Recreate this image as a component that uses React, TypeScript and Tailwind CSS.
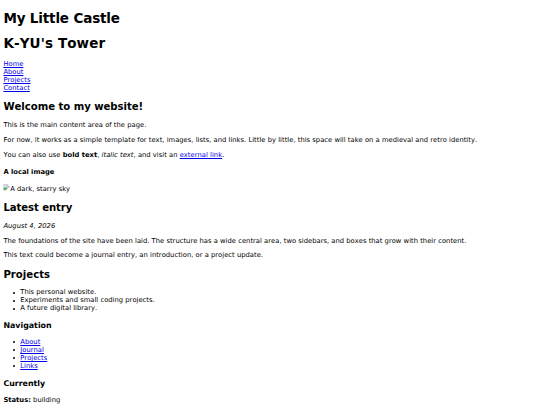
import type { ReactNode } from "react";

function Link({ children }: { children: ReactNode }) {
  return (
    <a href="#" className="text-[#0000ee] underline decoration-[0.5px]">
      {children}
    </a>
  );
}

function H2({ children, className = "" }: { children: ReactNode; className?: string }) {
  return <h2 className={`mt-[8.404px] mb-[7.404px] pt-[1px] text-[10.125px] leading-[12.234px] font-bold ${className}`}>{children}</h2>;
}

function H3({ children }: { children: ReactNode }) {
  return <h3 className="mt-[7.898px] mb-[6.898px] pt-[1px] text-[7.898px] leading-[9.703px] font-bold tracking-[0.01px]">{children}</h3>;
}

function P({ children }: { children: ReactNode }) {
  return <p className="my-[6.75px]">{children}</p>;
}

function Item({ children }: { children: ReactNode }) {
  return (
    <li className="flex items-center">
      <span className="mt-[0.5px] mr-[5px] h-[2px] w-[2px] shrink-0 rounded-full bg-black" />
      <span>{children}</span>
    </li>
  );
}

function BrokenImage({ alt }: { alt: string }) {
  return (
    <span className="inline-flex h-[8.4px] items-start">
      <svg viewBox="0 0 16 16" className="-mt-[0.5px] h-[6.75px] w-[6.75px] shrink-0" aria-hidden="true">
        <path d="M1.5 1.5h9l4 4v3l-3 1.5-3 3-2 1.5h-5z" fill="#c5d8f5" stroke="#9a9a9a" />
        <path d="M10.5 1.5v4h4" fill="#fff" stroke="#9a9a9a" />
        <path d="M2 14v-3l4-4 4 3-4 4z" fill="#4caf50" />
        <path d="M3.5 5.5a1.5 1.5 0 0 1 3-1 1.5 1.5 0 0 1 1 2h-4z" fill="#fff" />
      </svg>
      <span>{alt}</span>
    </span>
  );
}

export default function App() {
  return (
    <main className="flow-root h-[405px] overflow-hidden bg-white px-[3.375px] font-['DejaVu_Sans',Verdana,sans-serif] text-[6.75px] leading-[8.016px] tracking-[0.024px] text-black [font-kerning:none]">
      <h1 className="mt-[9.045px] pt-[0.5px] text-[13.5px] leading-[16.453px] font-bold tracking-[-0.15px]">
        My Little Castle
      </h1>
      <h1 className="mt-[8.545px] mb-[9.045px] text-[13.5px] leading-[16.453px] font-bold tracking-[0.12px]">
        K-YU's Tower
      </h1>
      <nav>
        <div><Link>Home</Link></div>
        <div><Link>About</Link></div>
        <div><Link>Projects</Link></div>
        <div><Link>Contact</Link></div>
      </nav>

      <H2 className="tracking-[-0.03px]">Welcome to my website!</H2>
      <P>This is the main content area of the page.</P>
      <P>
        For now, it works as a simple template for text, images, lists, and links. Little by little, this space will
        take on a medieval and retro identity.
      </P>
      <P>
        You can also use <strong className="font-bold">bold text</strong>, <em>italic text</em>, and visit an{" "}
        <Link>external link</Link>.
      </P>
      <h4 className="my-[8.978px] font-bold tracking-normal">A local image</h4>
      <div className="flex h-[8.3px]">
        <BrokenImage alt="A dark, starry sky" />
      </div>

      <H2 className="tracking-[-0.08px]">Latest entry</H2>
      <P><em>August 4, 2026</em></P>
      <P>
        The foundations of the site have been laid. The structure has a wide central area, two sidebars, and boxes that
        grow with their content.
      </P>
      <P>This text could become a journal entry, an introduction, or a project update.</P>

      <H2>Projects</H2>
      <ul className="my-[6.75px] pl-[9.875px]">
        <Item>This personal website.</Item>
        <Item>Experiments and small coding projects.</Item>
        <Item>A future digital library.</Item>
      </ul>

      <H3>Navigation</H3>
      <ul className="my-[6.75px] pl-[9.875px]">
        <Item><Link>About</Link></Item>
        <Item><Link>Journal</Link></Item>
        <Item><Link>Projects</Link></Item>
        <Item><Link>Links</Link></Item>
      </ul>

      <H3>Currently</H3>
      <P><strong className="font-bold">Status:</strong> building</P>
    </main>
  );
}
